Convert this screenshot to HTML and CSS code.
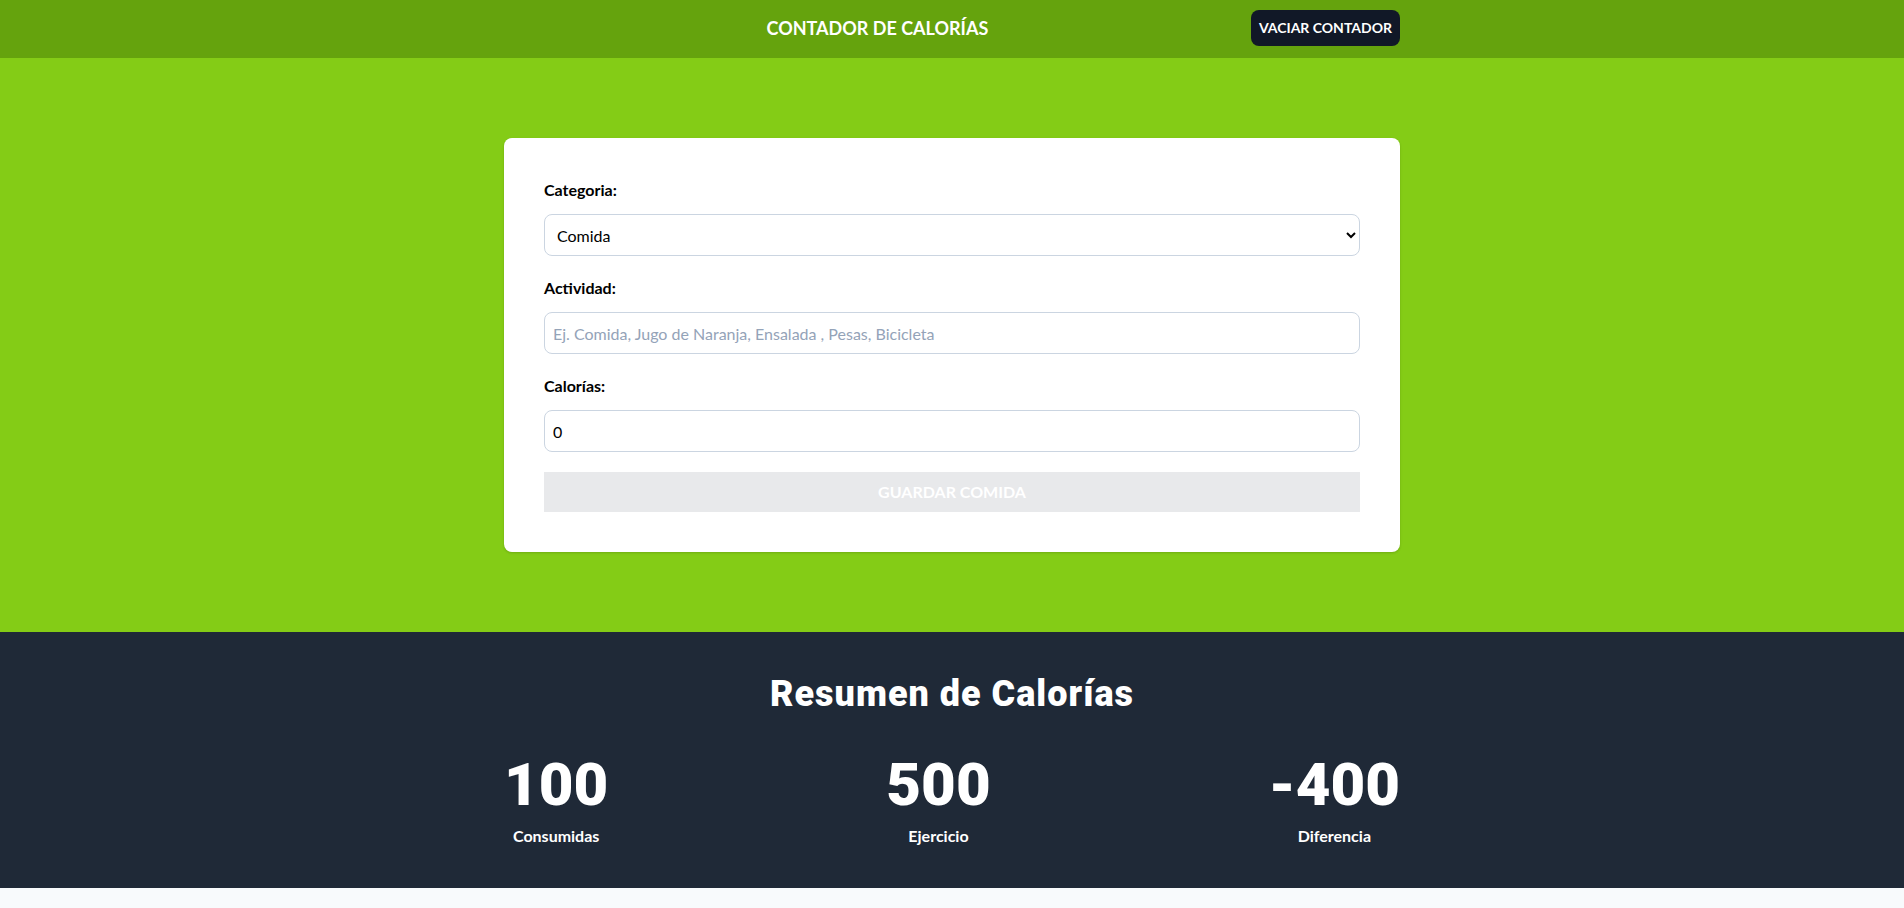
FILE: index.html
```html
<!DOCTYPE html>
<html lang="es">
<head>
<meta charset="utf-8">
<title>Contador de Calorías</title>
<link rel="stylesheet" href="styles.css">
</head>
<body>
<header class="topbar">
  <div class="container topbar-inner">
    <h1 class="app-title">Contador de Calorías</h1>
    <button class="reset-btn" type="button">Vaciar Contador</button>
  </div>
</header>

<section class="form-section">
  <div class="container">
    <form class="card">
      <div class="field">
        <label class="field-label" for="category">Categoria:</label>
        <select id="category" class="control select">
          <option>Comida</option>
          <option>Ejercicio</option>
        </select>
      </div>
      <div class="field">
        <label class="field-label" for="name">Actividad:</label>
        <input id="name" class="control" type="text" placeholder="Ej. Comida, Jugo de Naranja, Ensalada , Pesas, Bicicleta">
      </div>
      <div class="field">
        <label class="field-label" for="calories">Calorías:</label>
        <input id="calories" class="control" type="number" value="0">
      </div>
      <button class="submit-btn" type="submit" disabled>Guardar Comida</button>
    </form>
  </div>
</section>

<section class="summary">
  <div class="container">
    <h2 class="summary-title">Resumen de Calorías</h2>
    <div class="stats">
      <div class="stat">
        <span class="stat-num">100</span>
        <span class="stat-label">Consumidas</span>
      </div>
      <div class="stat">
        <span class="stat-num">500</span>
        <span class="stat-label">Ejercicio</span>
      </div>
      <div class="stat">
        <span class="stat-num">-400</span>
        <span class="stat-label">Diferencia</span>
      </div>
    </div>
  </div>
</section>
</body>
</html>
```
FILE: styles.css
```css
* { box-sizing: border-box; }

html, body {
  margin: 0;
  padding: 0;
}

body {
  background: #f8fafc;
  font-family: "Lato", "Noto Sans", "Liberation Sans", sans-serif;
  font-size: 16px;
  line-height: 24px;
  color: #000;
}

.container {
  max-width: 896px;
  margin: 0 auto;
}

/* header */
.topbar {
  background: #65a30d;
  padding: 10px 0 12px;
}

.topbar-inner {
  display: flex;
  align-items: center;
}

.app-title {
  flex: 1;
  margin: 0;
  text-align: center;
  color: #fff;
  font-size: 18px;
  line-height: 28px;
  font-weight: 700;
  text-transform: uppercase;
}

.reset-btn {
  background: #111827;
  color: #fff;
  border: 0;
  border-radius: 8px;
  padding: 8px;
  font-family: inherit;
  font-size: 14px;
  line-height: 20px;
  font-weight: 700;
  text-transform: uppercase;
  cursor: pointer;
}

/* form */
.form-section {
  background: #84cc16;
  padding: 80px 0;
}

.card {
  background: #fff;
  border-radius: 8px;
  padding: 40px;
  box-shadow: 0 1px 3px rgba(0,0,0,0.1), 0 1px 2px rgba(0,0,0,0.06);
  display: flex;
  flex-direction: column;
  gap: 20px;
}

.field {
  display: flex;
  flex-direction: column;
  gap: 12px;
}

.field-label {
  font-weight: 700;
  font-size: 16px;
  line-height: 24px;
}

.control {
  display: block;
  width: 100%;
  height: 42px;
  border: 1px solid #cbd5e1;
  border-radius: 8px;
  padding: 8px;
  font-family: inherit;
  font-size: 16px;
  line-height: 24px;
  color: #000;
  background: #fff;
}

.control::placeholder {
  color: #94a3b8;
}

.select {
  padding-left: 8px;
}

.submit-btn {
  display: block;
  width: 100%;
  height: 40px;
  border: 0;
  padding: 8px;
  background: #e8e9eb;
  color: #fff;
  font-family: inherit;
  font-size: 16px;
  line-height: 24px;
  font-weight: 700;
  text-transform: uppercase;
}

/* summary */
.summary {
  background: #1f2937;
  padding: 40px 0;
  color: #fff;
}

.summary-title {
  margin: 0;
  padding-top: 2px;
  text-align: center;
  font-family: "Roboto", "Lato", sans-serif;
  font-size: 36px;
  line-height: 40px;
  font-weight: 900;
  letter-spacing: 1px;
}

.stats {
  display: flex;
  justify-content: space-between;
  margin-top: 41px;
}

.stat {
  display: flex;
  flex-direction: column;
  align-items: center;
  gap: 9px;
}

.stat-num {
  font-family: "Roboto", "Lato", sans-serif;
  font-size: 60px;
  line-height: 60px;
  font-weight: 900;
}

.stat-label {
  font-size: 16px;
  line-height: 24px;
  font-weight: 700;
}
```
